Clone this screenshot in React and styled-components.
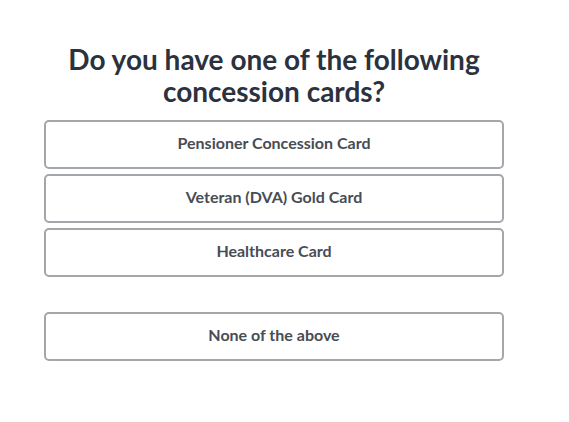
import React from "react";
import styled, { createGlobalStyle } from "styled-components";

const Global = createGlobalStyle`
  html, body { margin: 0; padding: 0; background: #ffffff; }
  body { font-family: Lato, "Open Sans", sans-serif; }
`;

const Page = styled.div`
  width: 460px;
  margin-left: 44px;
  padding-top: 43px;
  display: flex;
  flex-direction: column;
`;

const Heading = styled.h1`
  margin: 0 0 13px;
  font-size: 28px;
  line-height: 32px;
  font-weight: 700;
  color: #2c323d;
  text-align: center;
`;

const Options = styled.div`
  display: flex;
  flex-direction: column;
  gap: 5px;
`;

const Option = styled.button`
  box-sizing: border-box;
  width: 100%;
  height: 49px;
  margin-top: ${(p) => (p.$separated ? "30px" : "0")};
  border: 2px solid #a3a6ab;
  border-radius: 5px;
  background: #ffffff;
  font-family: Lato, "Open Sans", sans-serif;
  font-size: 16px;
  font-weight: 700;
  color: #474c55;
  cursor: pointer;
  padding: 0 0 4px;
`;

export default function App() {
  return (
    <>
      <Global />
      <Page>
        <Heading>
          Do you have one of the following
          <br />
          concession cards?
        </Heading>
        <Options>
          <Option>Pensioner Concession Card</Option>
          <Option>Veteran (DVA) Gold Card</Option>
          <Option>Healthcare Card</Option>
          <Option $separated>None of the above</Option>
        </Options>
      </Page>
    </>
  );
}
